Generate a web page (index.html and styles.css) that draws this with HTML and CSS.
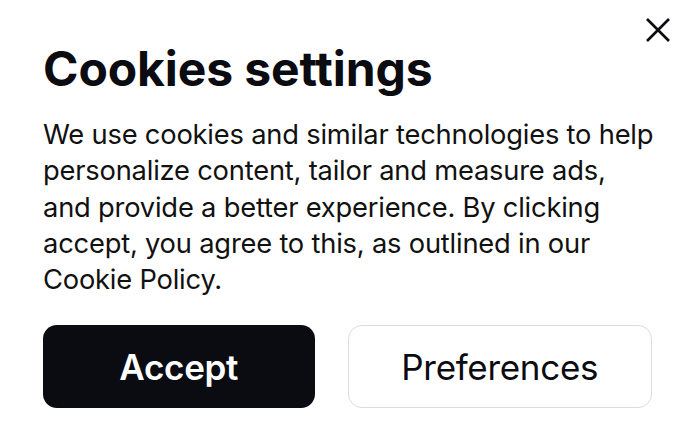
FILE: index.html
```html
<!DOCTYPE html>
<html lang="en">
<head>
<meta charset="utf-8">
<link rel="stylesheet" href="styles.css">
</head>
<body>
<div class="sheet">
  <div class="top">
    <button class="close" aria-label="Close">
      <svg width="24" height="24" viewBox="0 0 24 24"><path d="M1 1 L23 23 M23 1 L1 23" stroke="#0b0b12" stroke-width="2.6" fill="none"/></svg>
    </button>
  </div>
  <h1 class="title">Cookies settings</h1>
  <p class="text">We use cookies and similar technologies to help personalize content, tailor and measure ads, and provide a better experience. By clicking accept, you agree to this, as outlined in our Cookie Policy.</p>
  <div class="actions">
    <button class="btn btn-primary">Accept</button>
    <button class="btn btn-secondary">Preferences</button>
  </div>
</div>
</body>
</html>
```
FILE: styles.css
```css
* { box-sizing: border-box; }
html, body { margin: 0; padding: 0; background: #fff; }
body { font-family: Inter, "Noto Sans", sans-serif; color: #0b0b12; }
.sheet { width: 688px; height: 447px; padding: 0 36px 0 43px; display: flex; flex-direction: column; }
.top { display: flex; justify-content: flex-end; padding-top: 18px; margin-right: -18px; height: 42px; }
.close { border: 0; background: none; padding: 0; width: 24px; height: 24px; cursor: pointer; }
.close svg { display: block; }
.title { margin: 0; font-size: 48px; font-weight: 700; line-height: 56px; letter-spacing: -0.1px; margin-top: -1px; }
.text { margin: 20px 0 0; font-size: 27.3px; line-height: 36.3px; font-weight: 400; letter-spacing: -0.2px; color: #111; width: 614px; }
.actions { display: flex; gap: 33px; margin-top: 27px; }
.btn { height: 83px; border-radius: 14px; font-family: Inter, "Noto Sans", sans-serif; font-size: 35px; cursor: pointer; letter-spacing: -0.3px; }
.btn-primary { width: 272px; background: #0b0b12; color: #fff; border: 0; font-weight: 600; }
.btn-secondary { width: 305px; background: #fff; color: #0b0b12; border: 1px solid #dcdcdf; font-weight: 400; }
```
